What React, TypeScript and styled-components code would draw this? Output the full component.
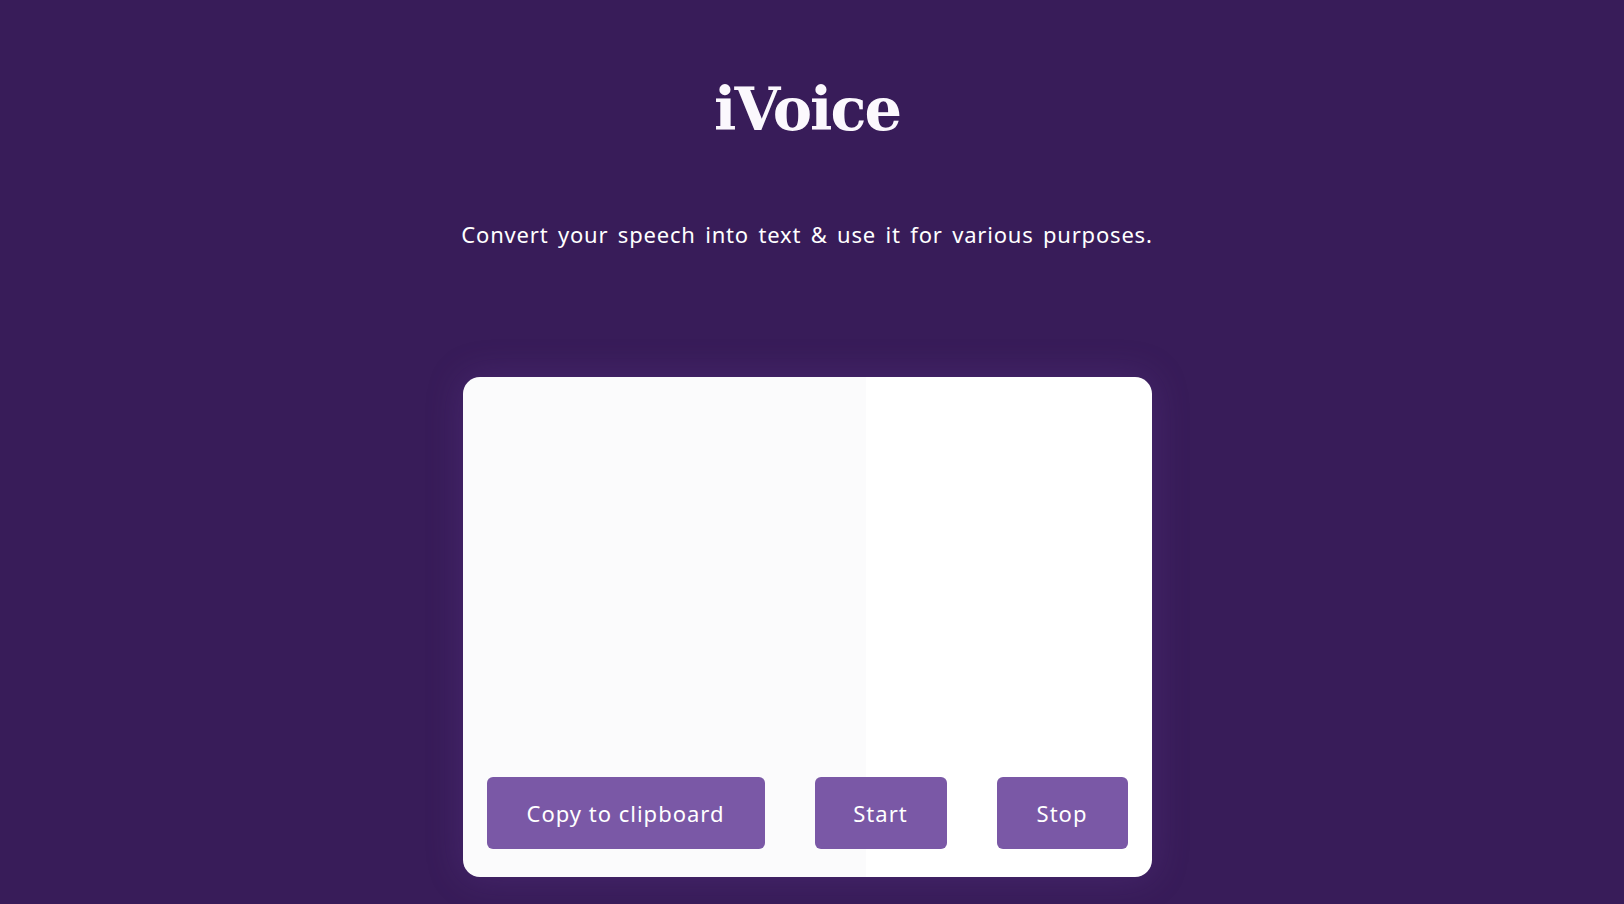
import React from "react";
import styled, { createGlobalStyle } from "styled-components";

const Global = createGlobalStyle`
  html, body {
    margin: 0;
    padding: 0;
    background: #381c59;
  }
  body {
    font-family: "Noto Sans", "Open Sans", sans-serif;
  }
`;

const Page = styled.main`
  min-height: 904px;
  box-sizing: border-box;
  display: flex;
  flex-direction: column;
  align-items: center;
  padding: 0 10px 0 0;
  background: #381c59;
  color: #ffffff;
`;

const Title = styled.h1`
  margin: 65px 0 0;
  font-family: "DejaVu Serif", "Liberation Serif", serif;
  font-weight: 700;
  font-size: 59px;
  line-height: 90px;
  letter-spacing: -2px;
  color: #fbf8fd;
`;

const Subtitle = styled.p`
  margin: 64px 0 0;
  font-family: "Noto Sans", sans-serif;
  font-size: 22px;
  line-height: 30px;
  letter-spacing: 0.8px;
  word-spacing: 3px;
  color: #ffffff;
`;

const Card = styled.section`
  margin-top: 128px;
  width: 689px;
  height: 500px;
  box-sizing: border-box;
  border-radius: 17px;
  background: linear-gradient(to right, #fbfbfc 0, #fbfbfc 403px, #ffffff 403px);
  box-shadow: 0 0 36px rgba(110, 70, 160, 0.28);
  display: flex;
  flex-direction: column;
  justify-content: flex-end;
  padding: 0 24px 28px;
`;

const ButtonRow = styled.div`
  display: flex;
  justify-content: space-between;
  align-items: center;
`;

const Button = styled.button<{ $w: number }>`
  width: ${(p) => p.$w}px;
  height: 72px;
  padding: 0;
  border: none;
  border-radius: 6px;
  background: #7a58a6;
  color: #ffffff;
  font-family: "Noto Sans", sans-serif;
  font-size: 22px;
  letter-spacing: 1px;
  cursor: pointer;
`;

export default function App() {
  return (
    <>
      <Global />
      <Page>
        <Title>iVoice</Title>
        <Subtitle>Convert your speech into text &amp; use it for various purposes.</Subtitle>
        <Card>
          <ButtonRow>
            <Button $w={278}>Copy to clipboard</Button>
            <Button $w={132}>Start</Button>
            <Button $w={131}>Stop</Button>
          </ButtonRow>
        </Card>
      </Page>
    </>
  );
}
